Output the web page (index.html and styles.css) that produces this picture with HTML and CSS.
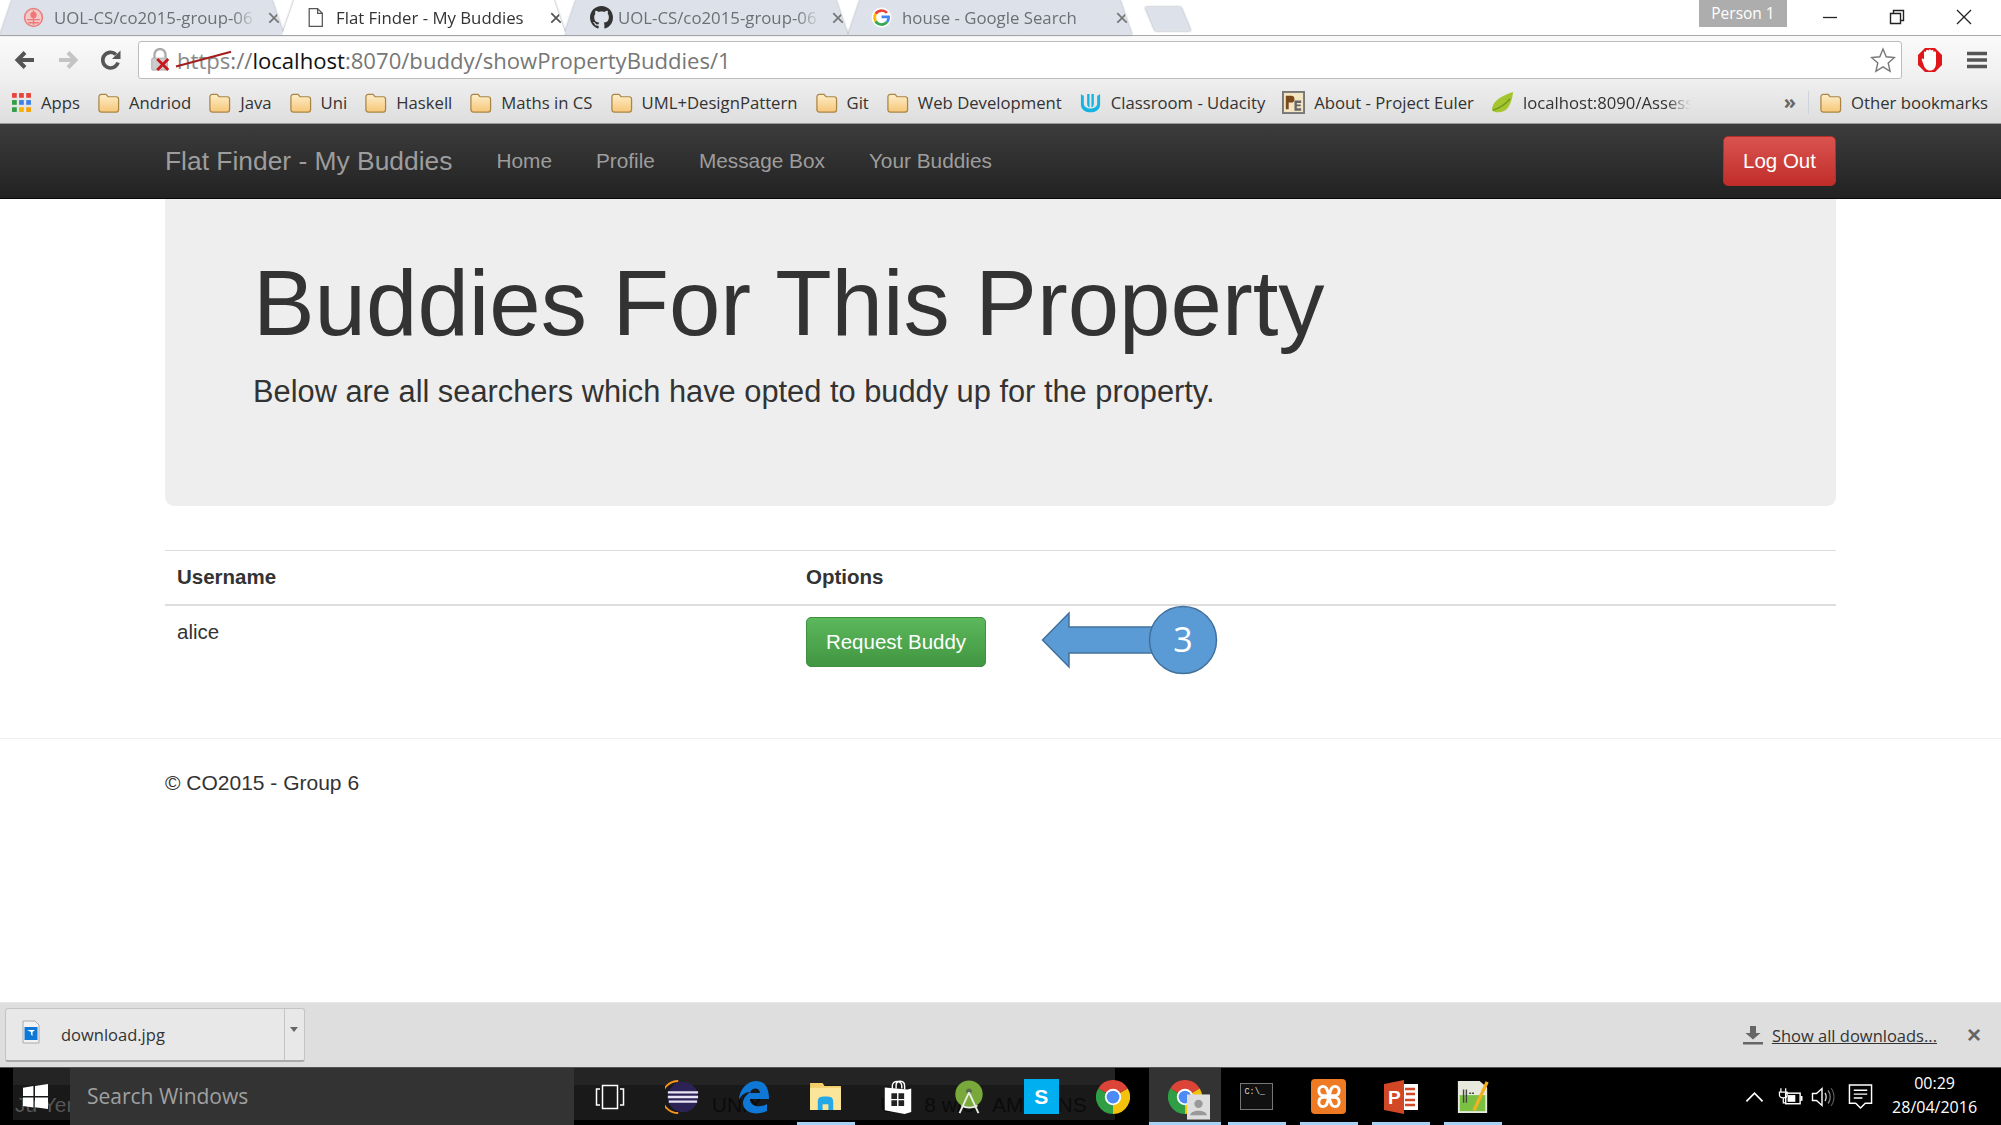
FILE: index.html
```html
<!DOCTYPE html>
<html lang="en">
<head>
  <meta charset="UTF-8" />
  <title>Flat Finder - My Buddies</title>
  <link rel="stylesheet" href="styles.css">
</head>
<body>

<svg class="defs" width="0" height="0">
  <defs>
    <linearGradient id="folderFill" x1="0" y1="0" x2="0" y2="1">
      <stop offset="0" stop-color="#fdeec9"/>
      <stop offset="1" stop-color="#f6c677"/>
    </linearGradient>
    <symbol id="folder" viewBox="0 0 24 22">
      <path d="M2 5.5C2 3.5 3 2.500 4.500 2.500H9.500L11.500 5H20C21.500 5 22.500 6 22.500 7.500V18.500C22.500 20 21.500 21 20 21H4.500C3 21 2 20 2 18.500Z" fill="url(#folderFill)" stroke="#a98547" stroke-width="1.300"/>
    </symbol>
    <symbol id="chrome" viewBox="0 0 24 24">
      <path d="M12 12L1.600 6A12 12 0 0 1 22.400 6Z" fill="#db4437"/>
      <path d="M12 12L22.400 6A12 12 0 0 1 12 24Z" fill="#f4c20d"/>
      <path d="M12 12L12 24A12 12 0 0 1 1.600 6Z" fill="#2f9e44"/>
      <circle cx="12" cy="12" r="5.800" fill="#fff"/>
      <circle cx="12" cy="12" r="4.500" fill="#4c8bf5"/>
    </symbol>
  </defs>
</svg>

<!-- browser tabs -->
<div class="tabstrip">
  <div class="tabs">
    <div class="tab">
      <svg class="favicon" viewBox="0 0 20 20"><circle cx="10" cy="10" r="8.500" fill="#f6c9c9" stroke="#e58080" stroke-width="1.500"/><circle cx="10" cy="7.500" r="3" fill="#e77"/><path d="M4 12H16M5 15H15M10 3V17" stroke="#e77" stroke-width="1.300"/></svg>
      <span class="tab-title">UOL-CS/co2015-group-06</span>
      <span class="tab-close">&times;</span>
    </div>
    <div class="tab active">
      <svg class="favicon" viewBox="0 0 20 20"><path d="M4 1.500H12L16.500 6V18.500H4Z M12 1.500V6H16.500" fill="#fff" stroke="#555" stroke-width="1.200"/></svg>
      <span class="tab-title">Flat Finder - My Buddies</span>
      <span class="tab-close">&times;</span>
    </div>
    <div class="tab">
      <svg class="favicon github" viewBox="0 0 16 16"><path fill="#333" d="M8 0C3.580 0 0 3.580 0 8c0 3.540 2.290 6.530 5.470 7.590.4.070.55-.17.55-.38 0-.19-.01-.82-.01-1.490-2.010.37-2.530-.49-2.690-.94-.09-.23-.48-.94-.82-1.130-.28-.15-.68-.52-.01-.53.63-.01 1.080.58 1.230.82.720 1.210 1.870.87 2.330.66.070-.52.280-.87.510-1.070-1.780-.2-3.640-.89-3.640-3.950 0-.87.310-1.590.820-2.150-.08-.2-.36-1.020.08-2.120 0 0 .67-.21 2.200.82.640-.18 1.320-.27 2-.27s1.360.09 2 .27c1.530-1.040 2.200-.82 2.200-.82.440 1.100.16 1.920.08 2.120.51.56.82 1.270.82 2.150 0 3.070-1.870 3.750-3.650 3.950.29.250.54.730.54 1.480 0 1.070-.01 1.930-.01 2.200 0 .21.150.46.550.38A8.010 8.010 0 0 0 16 8c0-4.420-3.580-8-8-8z"/></svg>
      <span class="tab-title">UOL-CS/co2015-group-06</span>
      <span class="tab-close">&times;</span>
    </div>
    <div class="tab">
      <svg class="favicon" viewBox="0 0 20 20">
        <circle cx="10" cy="10" r="9.500" fill="#fff"/>
        <path d="M15.200 5.600A6.800 6.800 0 0 0 4.400 6.500" fill="none" stroke="#ea4335" stroke-width="2.600"/>
        <path d="M4.400 6.500A6.800 6.800 0 0 0 4.400 13.500" fill="none" stroke="#fbbc05" stroke-width="2.600"/>
        <path d="M4.400 13.500A6.800 6.800 0 0 0 15.400 14.200" fill="none" stroke="#34a853" stroke-width="2.600"/>
        <path d="M15.400 14.200A6.800 6.800 0 0 0 16.800 9.500H10" fill="none" stroke="#4285f4" stroke-width="2.600"/>
      </svg>
      <span class="tab-title">house - Google Search</span>
      <span class="tab-close">&times;</span>
    </div>
    <div class="new-tab"></div>
  </div>
  <div class="person">Person 1</div>
  <div class="window-controls">
    <svg viewBox="0 0 16 16"><path d="M1 8.500H15" stroke="#222" stroke-width="1.300"/></svg>
    <svg viewBox="0 0 16 16"><path d="M1.500 4.500H11.500V14.500H1.500Z M4.500 4.500V1.500H14.500V11.500H11.500" fill="none" stroke="#222" stroke-width="1.400"/></svg>
    <svg viewBox="0 0 16 16"><path d="M1 1L15 15M15 1L1 15" stroke="#222" stroke-width="1.300"/></svg>
  </div>
</div>

<!-- address bar -->
<div class="toolbar">
  <div class="nav-buttons">
    <svg viewBox="0 0 24 24"><path d="M21 12H7M12 4.500L4.500 12L12 19.500" fill="none" stroke="#555" stroke-width="4"/></svg>
    <svg viewBox="0 0 24 24"><path d="M3 12H17M12 4.500L19.500 12L12 19.500" fill="none" stroke="#c4c4c4" stroke-width="4"/></svg>
    <svg viewBox="0 0 24 24"><path d="M19 14.500A7.800 7.800 0 1 1 17 6.500" fill="none" stroke="#555" stroke-width="3.600"/><path d="M21.500 2.500V11H13Z" fill="#555"/></svg>
  </div>
  <div class="omnibox">
    <svg class="lock" viewBox="0 0 24 26"><path d="M6 11V7A6 6 0 0 1 18 7V11" fill="none" stroke="#aaa" stroke-width="2.500"/><rect x="3" y="11" width="17" height="13" rx="1" fill="#ccc" stroke="#aaa"/><path d="M9 12L21 24M21 12L9 24" stroke="#c8171d" stroke-width="3"/></svg>
    <span class="url"><span class="url-scheme">https</span><span class="url-grey">://</span><span class="url-host">localhost</span><span class="url-grey">:8070/buddy/showPropertyBuddies/1</span></span>
    <svg class="star" viewBox="0 0 26 26"><path d="M13 2L16.200 9.800L24.500 10.500L18.200 16L20.100 24.300L13 19.900L5.900 24.300L7.800 16L1.500 10.500L9.800 9.800Z" fill="#fff" stroke="#777" stroke-width="1.400"/></svg>
  </div>
  <div class="toolbar-end">
    <svg class="adblock" viewBox="0 0 26 26"><path d="M8 1H18L25 8V18L18 25H8L1 18V8Z" fill="#e0161b"/><path d="M7 11V5.500C7 4 9 4 9 5.500V4C9 2.500 11.500 2.500 11.500 4V3.500C11.500 2 14 2 14 3.500V4C14 2.500 16.500 2.500 16.500 4V5.500C16.500 4 19 4 19 5.500V16C19 21 16.500 23.500 13 23.500C9.500 23.500 7.500 21 6.500 17.500L4.800 13C4.400 11.500 6 11 7 12.500Z" fill="#fff"/></svg>
    <svg class="menu" viewBox="0 0 20 20"><path d="M0 3.500H20M0 10H20M0 16.500H20" stroke="#555" stroke-width="3.600"/></svg>
  </div>
</div>

<!-- bookmarks -->
<div class="bookmarks">
  <div class="bookmark apps">
    <svg class="bm-icon" viewBox="0 0 20 20">
      <g fill="#e8433a"><rect x="1" y="1" width="4.500" height="4.500"/><rect x="7.700" y="1" width="4.500" height="4.500"/><rect x="14.500" y="1" width="4.500" height="4.500"/></g>
      <g fill="#2f9e44"><rect x="1" y="7.700" width="4.500" height="4.500"/></g>
      <g fill="#3f7fe8"><rect x="7.700" y="7.700" width="4.500" height="4.500"/><rect x="14.500" y="7.700" width="4.500" height="4.500"/></g>
      <rect x="1" y="14.500" width="4.500" height="4.500" fill="#2f9e44"/><rect x="7.700" y="14.500" width="4.500" height="4.500" fill="#f5b400"/><rect x="14.500" y="14.500" width="4.500" height="4.500" fill="#f5a100"/>
    </svg>
    <span>Apps</span>
  </div>
  <div class="bookmark"><svg class="bm-icon"><use href="#folder"/></svg><span>Andriod</span></div>
  <div class="bookmark"><svg class="bm-icon"><use href="#folder"/></svg><span>Java</span></div>
  <div class="bookmark"><svg class="bm-icon"><use href="#folder"/></svg><span>Uni</span></div>
  <div class="bookmark"><svg class="bm-icon"><use href="#folder"/></svg><span>Haskell</span></div>
  <div class="bookmark"><svg class="bm-icon"><use href="#folder"/></svg><span>Maths in CS</span></div>
  <div class="bookmark"><svg class="bm-icon"><use href="#folder"/></svg><span>UML+DesignPattern</span></div>
  <div class="bookmark"><svg class="bm-icon"><use href="#folder"/></svg><span>Git</span></div>
  <div class="bookmark"><svg class="bm-icon"><use href="#folder"/></svg><span>Web Development</span></div>
  <div class="bookmark">
    <svg class="bm-icon" viewBox="0 0 24 24"><path d="M2 3C2 3 3 4 5 5V13C5 20 19 20 19 13V5C21 4 22 3 22 3V14C22 25 2 25 2 14Z" fill="#15b4e0"/><path d="M8.500 3V13C8.500 16 10 17 11 17V3ZM15.500 3V13C15.500 16 14 17 13 17V3Z" fill="#15b4e0"/></svg>
    <span>Classroom - Udacity</span>
  </div>
  <div class="bookmark">
    <svg class="bm-icon" viewBox="0 0 24 24"><rect x="1" y="1" width="22" height="22" fill="#f3e4c2" stroke="#777" stroke-width="2"/><path d="M4 19V5H9.500A3.500 3.500 0 0 1 9.500 12H7V19Z" fill="#7a4a1e"/><path d="M13 10H20V12.500H15.500V14H19.500V16H15.500V18H20V20.500H13Z" fill="#666"/></svg>
    <span>About - Project Euler</span>
  </div>
  <div class="bookmark">
    <svg class="bm-icon" viewBox="0 0 24 24"><path d="M23 1C23 1 22 15 15 20C10 23 4 23 1 20C1 12 8 6 23 1Z" fill="#a5c52f"/><path d="M2 20C8 18 15 14 20 8" fill="none" stroke="#6f9a1e" stroke-width="1.500"/></svg>
    <span class="bm-fade">localhost:8090/Assess</span>
  </div>
  <div class="bm-more">&raquo;</div>
  <div class="bookmark bm-other"><svg class="bm-icon"><use href="#folder"/></svg><span>Other bookmarks</span></div>
</div>

<!-- the page itself -->
<div class="viewport">
  <nav class="navbar">
    <a class="brand" href="#">Flat Finder - My Buddies</a>
    <ul class="nav-links">
      <li><a href="#">Home</a></li>
      <li><a href="#">Profile</a></li>
      <li><a href="#">Message Box</a></li>
      <li><a href="#">Your Buddies</a></li>
    </ul>
    <a class="btn btn-logout" href="#">Log Out</a>
  </nav>

  <main class="container">
    <section class="jumbotron">
      <h1>Buddies For This Property</h1>
      <p>Below are all searchers which have opted to buddy up for the property.</p>
    </section>

    <table class="buddies">
      <thead>
        <tr><th class="col-name">Username</th><th>Options</th></tr>
      </thead>
      <tbody>
        <tr>
          <td>alice</td>
          <td>
            <div class="options">
              <a class="btn btn-request" href="#">Request Buddy</a>
              <svg class="callout" width="184" height="70" viewBox="0 0 184 70">
                <path d="M1.500 35L28 8V22H120V48H28V62Z" fill="#5b9bd5" stroke="#41719c" stroke-width="1.500"/>
                <circle cx="142" cy="35" r="33.500" fill="#5b9bd5" stroke="#41719c" stroke-width="1.500"/>
                <text x="142" y="47" text-anchor="middle" class="callout-num">3</text>
              </svg>
            </div>
          </td>
        </tr>
      </tbody>
    </table>
  </main>

  <footer class="page-footer">
    <p>&copy; CO2015 - Group 6</p>
  </footer>
</div>

<!-- downloads shelf -->
<div class="shelf">
  <div class="download-item">
    <div class="download-main">
      <svg class="file-icon" viewBox="0 0 18 24"><path d="M1 1H13L17 5V23H1Z" fill="#f2f2f2" stroke="#aaa"/><rect x="2.500" y="7" width="13" height="13" fill="#0f78d7"/><path d="M5 10H13L10.500 12V16L9 14.500V12Z" fill="#fff"/></svg>
      <span>download.jpg</span>
    </div>
    <div class="download-caret"></div>
  </div>
  <div class="shelf-end">
    <svg class="dl-arrow" viewBox="0 0 20 20"><path d="M7 1H13V8H17.500L10 14.500L2.500 8H7ZM0 17H20V19.500H0Z" fill="#666"/></svg>
    <a class="show-all" href="#">Show all downloads...</a>
    <span class="shelf-close">&times;</span>
  </div>
</div>

<!-- windows taskbar -->
<div class="taskbar">
  <div class="ghost-window">
    <span class="ghost-a">Ju Yeng</span>
    <span class="ghost-b">UNIX</span>
    <span class="ghost-c">U&nbsp;&nbsp;&nbsp;&nbsp;&nbsp;8 w/o&nbsp;&nbsp;&nbsp;AM</span>
    <span class="ghost-d">NS</span>
  </div>
  <div class="start">
    <svg viewBox="0 0 24 24"><path d="M0 3.500L10 2V11.500H0ZM11.500 1.800L24 0V11.500H11.500ZM0 13H10V22.500L0 21ZM11.500 13H24V24L11.500 22.200Z" fill="#fff"/></svg>
  </div>
  <div class="search-box">Search Windows</div>
  <div class="task-icons">
    <div class="task"><svg class="ti taskview" viewBox="0 0 30 26"><rect x="7.500" y="1.500" width="15" height="23" fill="none" stroke="#fff" stroke-width="1.500"/><path d="M5 5H1.500V21H5M25 5H28.500V21H25" fill="none" stroke="#fff" stroke-width="1.500"/></svg></div>
    <div class="task"><svg class="ti" viewBox="0 0 36 36"><path d="M14 1A17 17 0 0 0 14 35" fill="none" stroke="#f7941e" stroke-width="2"/><circle cx="19" cy="18" r="16" fill="#2c2255"/><path d="M3 13H35M3 18H35M4 23H34" stroke="#e8e4f5" stroke-width="2.400"/></svg></div>
    <div class="task"><svg class="ti" viewBox="0 0 32 34"><path d="M1 20C1 10 9 1 18 1C27 1 31 8 31 19H12C12 27 22 28 29 24V31C19 36 5 33 5 23C5 18 9 14 13 12C7 12 3 15 1 20ZM12 13H22C22 7 13 7 12 13Z" fill="#0f78d7" fill-rule="evenodd"/></svg></div>
    <div class="task running"><svg class="explorer" viewBox="0 0 32 28"><path d="M0 0H13L15 3H32V28H0Z" fill="#f2cf6b"/><path d="M0 5H32V28H0Z" fill="#fbe59b"/><path d="M8 28V20C8 15 10 14 16 14C22 14 24 15 24 20V28H19V22H13V28Z" fill="#23a9e8"/></svg></div>
    <div class="task"><svg class="ti" viewBox="0 0 30 36"><path d="M9 9V6C9 0 19 0 19 6V9M13 9V5C13 0 22 0 22 6V10" fill="none" stroke="#fff" stroke-width="1.500"/><path d="M1 8L25 10L29 9V34L22 36L1 32Z" fill="#fff"/><path d="M8 14H14V20H8ZM15.500 14H21.500V20H15.500ZM8 21.500H14V27.500H8ZM15.500 21.500H21.500V27.500H15.500Z" fill="#222"/></svg></div>
    <div class="task"><svg class="ti" viewBox="0 0 30 36"><circle cx="15" cy="15" r="14.500" fill="#78a93a"/><circle cx="15" cy="12" r="3" fill="#5b6b50"/><path d="M15 13L5 35M15 13L25 35M7 27C12 30 19 30 24 27" fill="none" stroke="#e9ede4" stroke-width="2"/></svg></div>
    <div class="task"><div class="skype">S</div></div>
    <div class="task"><svg class="ti"><use href="#chrome"/></svg></div>
    <div class="task running current">
      <div class="chrome-person">
        <svg class="ti"><use href="#chrome"/></svg>
        <svg class="person-badge" viewBox="0 0 22 24"><rect width="22" height="24" fill="#ddd"/><circle cx="11" cy="9" r="4" fill="#999"/><path d="M3 20C3 14 19 14 19 20Z" fill="#999"/></svg>
      </div>
    </div>
    <div class="task running"><div class="cmd">C:\_</div></div>
    <div class="task running"><div class="xampp"><svg viewBox="0 0 20 20"><path d="M6 3C2 3 2 9 6 9.500H14C18 9 18 3 14 3C11 3 11 7 10 10C9 7 9 3 6 3ZM6 17C2 17 2 11 6 10.500H14C18 11 18 17 14 17C11 17 11 13 10 10C9 13 9 17 6 17Z" fill="none" stroke="#fff" stroke-width="2"/></svg></div></div>
    <div class="task running"><svg class="ti" viewBox="0 0 34 34"><rect x="17" y="4" width="17" height="26" fill="#fff"/><path d="M21 9H31M22 14H31M21 20H31M21 25H31" stroke="#d24726" stroke-width="2.500"/><path d="M0 4L20 0V34L0 30Z" fill="#d24726"/><text x="4" y="24" class="ppt-letter">P</text></svg></div>
    <div class="task running"><svg class="ti" viewBox="0 0 34 36"><path d="M1 1H24L32 8V35H1Z" fill="#e6e9dc"/><path d="M3 16H30V33H3Z" fill="#7ac142"/><path d="M7 10V24M10 10V24" stroke="#444" stroke-width="1.500"/><path d="M13 14H18" stroke="#444" stroke-width="1.500" stroke-dasharray="2 1"/><path d="M32 2L20 28L18 32" stroke="#f5b021" stroke-width="3.500" fill="none"/></svg></div>
  </div>
  <div class="tray">
    <svg class="tray-chevron" viewBox="0 0 20 12"><path d="M1.500 10.500L10 2L18.500 10.500" fill="none" stroke="#fff" stroke-width="1.800"/></svg>
    <svg class="tray-power" viewBox="0 0 26 22"><path d="M3 2V6M8 2V6M1.500 6H9.500V9C9.500 11 7.500 12 5.500 12C3.500 12 1.500 11 1.500 9Z M5.500 12V17H8" fill="none" stroke="#fff" stroke-width="1.300"/><rect x="8" y="7" width="15" height="11" fill="none" stroke="#fff" stroke-width="1.500"/><rect x="10" y="9" width="8" height="7" fill="#fff"/><rect x="23.500" y="10" width="2" height="5" fill="#fff"/></svg>
    <svg class="tray-sound" viewBox="0 0 24 22"><path d="M1.500 7.500H5.500L11 2.500V19.500L5.500 14.500H1.500Z" fill="none" stroke="#fff" stroke-width="1.400"/><path d="M14 7C15.500 9 15.500 13 14 15" fill="none" stroke="#ddd" stroke-width="1.300"/><path d="M17 4.500C20 8 20 14 17 17.500" fill="none" stroke="#888" stroke-width="1.200"/><path d="M20 2C24 7 24 15 20 20" fill="none" stroke="#555" stroke-width="1.200"/></svg>
    <svg class="tray-note" viewBox="0 0 26 28"><path d="M1.500 1.500H24.500V20.500H18L13 25.500L8 20.500H1.500Z" fill="none" stroke="#fff" stroke-width="1.500"/><path d="M6 7H20M6 11H20M6 15H15" stroke="#fff" stroke-width="1.500"/></svg>
    <div class="clock"><div>00:29</div><div>28/04/2016</div></div>
  </div>
</div>

</body>
</html>
```

FILE: styles.css
```css
/* Reset */
* {
  margin: 0; padding: 0; box-sizing: border-box;
}

html, body {
  width: 2001px;
  height: 1125px;
  overflow: hidden;
}

body {
  display: flex;
  flex-direction: column;
  background: #fff;
  color: #333;
  font-family: "Liberation Sans", Arial, sans-serif;
}

a {
  text-decoration: none;
}

.defs {
  position: absolute;
}

/* Tabs */
.tabstrip {
  height: 36px;
  flex-shrink: 0;
  display: flex;
  background: #fff;
  border-bottom: 1px solid #a9a9a9;
  font-family: "Open Sans", "Noto Sans", sans-serif;
}

.tabs {
  display: flex;
  align-items: flex-end;
  flex: 1;
  filter: drop-shadow(0 0 1px #8f96a1);
}

.tab {
  width: 284px;
  height: 35px;
  display: flex;
  align-items: center;
  padding: 0 3px 0 23px;
  gap: 10px;
  background: #dde2ea;
  color: #6c6f75;
  font-size: 16.800px;
  clip-path: polygon(0 100%, 12px 0, calc(100% - 12px) 0, 100% 100%);
}

.tab.active {
  width: 284px;
  margin: 0 -2px;
  background: #fff;
  color: #333;
  padding-left: 23px;
}

.favicon {
  width: 21px;
  height: 21px;
  flex-shrink: 0;
}

.favicon.github {
  width: 23px;
  height: 23px;
  margin-left: 3px;
  margin-right: -5px;
}

.tab-title {
  flex: 1;
  white-space: nowrap;
  overflow: hidden;
  -webkit-mask-image: linear-gradient(to right, #000 88%, transparent);
  mask-image: linear-gradient(to right, #000 88%, transparent);
}

.tab.active .tab-title {
  -webkit-mask-image: none;
  mask-image: none;
}

.tab-close {
  font-family: "Liberation Sans", sans-serif;
  font-size: 24px;
  line-height: 1;
  color: #777;
}

.tab.active .tab-close {
  color: #555;
}

.new-tab {
  width: 46px;
  height: 24px;
  margin: 0 0 4px 13px;
  background: #dde2ea;
  clip-path: polygon(0 0, 78% 0, 100% 100%, 22% 100%);
}

.person {
  width: 88px;
  height: 27px;
  margin-right: 12px;
  background: #adadad;
  color: #fff;
  font-size: 15.500px;
  text-align: center;
  line-height: 26px;
}

.window-controls {
  width: 202px;
  height: 35px;
  display: flex;
  align-items: flex-start;
  justify-content: space-between;
  padding: 9px 29px 0 23px;
}

.window-controls svg {
  width: 16px;
  height: 16px;
}

/* Address bar */
.toolbar {
  height: 46px;
  flex-shrink: 0;
  display: flex;
  align-items: center;
  padding-top: 2px;
  background: linear-gradient(#fafafa, #efefef);
}

.nav-buttons {
  width: 138px;
  display: flex;
  justify-content: space-between;
  padding: 0 15px 0 13px;
}

.nav-buttons svg {
  width: 24px;
  height: 24px;
}

.omnibox {
  width: 1764px;
  height: 38px;
  display: flex;
  align-items: center;
  padding: 0 5px 0 10px;
  background: #fff;
  border: 1px solid #bdbdbd;
  border-radius: 3px;
  font-family: "Open Sans", "Noto Sans", sans-serif;
  font-size: 22.100px;
}

.lock {
  width: 22px;
  height: 24px;
  margin-right: 6px;
}

.url {
  flex: 1;
  white-space: nowrap;
}

.url-scheme {
  position: relative;
  color: #888;
}

.url-scheme::after {
  content: "";
  position: absolute;
  left: -2px;
  right: -2px;
  top: 13px;
  height: 2px;
  background: #a51c1c;
  transform: rotate(-15deg);
}

.url-grey {
  color: #777;
}

.url-host {
  color: #111;
}

.star {
  width: 26px;
  height: 26px;
}

.toolbar-end {
  flex: 1;
  display: flex;
  align-items: center;
  justify-content: space-between;
  padding: 0 14px 0 15px;
}

.adblock {
  width: 26px;
  height: 26px;
}

.menu {
  width: 20px;
  height: 20px;
}

/* Bookmarks */
.bookmarks {
  height: 42px;
  flex-shrink: 0;
  display: flex;
  align-items: center;
  gap: 17px;
  padding: 0 13px 1px 11px;
  background: linear-gradient(#eeeeee, #dedede);
  border-bottom: 1px solid #9a9a9a;
  font-family: "Open Sans", "Noto Sans", sans-serif;
  font-size: 16.700px;
  color: #333;
}

.bookmark {
  display: flex;
  align-items: center;
  gap: 9px;
  white-space: nowrap;
}

.bm-icon {
  width: 23px;
  height: 23px;
  flex-shrink: 0;
}

.apps .bm-icon {
  width: 21px;
  height: 21px;
}

.bm-fade {
  width: 168px;
  overflow: hidden;
  -webkit-mask-image: linear-gradient(to right, #000 85%, transparent);
  mask-image: linear-gradient(to right, #000 85%, transparent);
}

.bm-more {
  margin-left: auto;
  margin-right: -5px;
  font-size: 20px;
  font-weight: 700;
  line-height: 1;
  color: #666;
}

.bm-other {
  padding-left: 10px;
  border-left: 1px solid #cfd4da;
}

/* Page */
.viewport {
  flex: 1;
  min-height: 0;
  background: #fff;
}

.navbar {
  height: 75px;
  display: flex;
  align-items: center;
  padding: 0 165px;
  background: linear-gradient(#3c3c3c, #222);
  border-bottom: 1px solid #080808;
}

.brand {
  font-size: 26.400px;
  color: #9d9d9d;
  margin-right: 22px;
}

.nav-links {
  display: flex;
  list-style: none;
  gap: 44px;
  flex: 1;
  margin-left: 22px;
}

.nav-links a {
  font-size: 20.800px;
  color: #9d9d9d;
}

.btn {
  display: inline-block;
  font-size: 20.500px;
  color: #fff;
  border-radius: 5px;
  text-align: center;
}

.btn-logout {
  width: 113px;
  height: 50px;
  line-height: 48px;
  background: linear-gradient(#d9534f, #c12e2a);
  border: 1px solid #b92c28;
}

.container {
  padding: 0 165px;
}

.jumbotron {
  height: 307px;
  padding: 54px 88px 0;
  background: #eee;
  border-radius: 0 0 9px 9px;
}

.jumbotron h1 {
  font-size: 92.400px;
  font-weight: 500;
  line-height: 101px;
  color: #333;
}

.jumbotron p {
  margin-top: 16px;
  font-size: 30.800px;
  line-height: 44px;
  color: #333;
}

.buddies {
  width: 100%;
  margin-top: 44px;
  border-collapse: collapse;
  table-layout: fixed;
  font-size: 20.500px;
}

.buddies th {
  height: 54px;
  padding: 0 12px;
  text-align: left;
  font-weight: 700;
  border-top: 1px solid #ddd;
  border-bottom: 2px solid #ddd;
}

.col-name {
  width: 629px;
}

.buddies td {
  padding: 11px 12px;
  vertical-align: top;
  line-height: 29px;
}

.options {
  display: flex;
  align-items: flex-start;
  gap: 55px;
}

.btn-request {
  width: 180px;
  height: 50px;
  line-height: 48px;
  background: linear-gradient(#5cb85c, #419641);
  border: 1px solid #3e8f3e;
}

.callout {
  margin-top: -12px;
}

.callout-num {
  font-family: "Open Sans", "Noto Sans", sans-serif;
  font-size: 34px;
  fill: #fff;
}

.page-footer {
  margin-top: 52px;
  padding: 29px 165px 0;
  border-top: 1px solid #eee;
  font-size: 21px;
  line-height: 30px;
}

/* Downloads shelf */
.shelf {
  height: 65px;
  flex-shrink: 0;
  display: flex;
  align-items: center;
  justify-content: space-between;
  padding: 0 20px 0 5px;
  background: #dedede;
  border-top: 1px solid #e6e6e6;
  font-family: "Open Sans", "Noto Sans", sans-serif;
  font-size: 16.500px;
  color: #333;
}

.download-item {
  width: 300px;
  height: 54px;
  display: flex;
  background: #e8e8e8;
  border: 1px solid #c4c4c4;
  border-bottom: 2px solid #aaa;
  border-radius: 3px;
}

.download-main {
  flex: 1;
  display: flex;
  align-items: center;
  gap: 21px;
  padding-left: 16px;
  border-right: 1px solid #c4c4c4;
}

.file-icon {
  width: 18px;
  height: 24px;
  margin-top: -6px;
}

.download-caret {
  width: 19px;
  position: relative;
}

.download-caret::after {
  content: "";
  position: absolute;
  top: 18px;
  left: 5px;
  border: 4px solid transparent;
  border-top: 5px solid #666;
}

.shelf-end {
  display: flex;
  align-items: center;
  gap: 9px;
}

.dl-arrow {
  width: 20px;
  height: 20px;
}

.show-all {
  color: #333;
  text-decoration: underline;
  margin-right: 21px;
}

.shelf-close {
  font-family: "Liberation Sans", sans-serif;
  font-size: 24px;
  font-weight: 700;
  line-height: 1;
  color: #666;
}

/* Taskbar */
.taskbar {
  height: 58px;
  flex-shrink: 0;
  position: relative;
  display: flex;
  background: #000;
  color: #fff;
  border-top: 1px solid #555;
}

.ghost-window {
  position: absolute;
  top: 0;
  left: 13px;
  width: 1102px;
  height: 52px;
  display: flex;
  align-items: flex-end;
  padding-bottom: 3px;
  background: linear-gradient(#242424 32%, #191919 33%);
  font-size: 21px;
  color: #0b0b0b;
  white-space: nowrap;
}

.ghost-a {
  margin-left: 2px;
  color: #555;
}

.ghost-b {
  margin-left: 622px;
}

.ghost-c {
  margin-left: 118px;
}

.ghost-d {
  margin-left: 34px;
}

.start {
  width: 70px;
  position: relative;
  display: flex;
  align-items: center;
  justify-content: center;
  padding-bottom: 1px;
}

.start svg {
  width: 25px;
  height: 25px;
}

.search-box {
  width: 504px;
  position: relative;
  background: #333;
  color: #a0a0a0;
  font-family: "Open Sans", "Noto Sans", sans-serif;
  font-size: 21px;
  padding-left: 17px;
  line-height: 56px;
}

.task-icons {
  display: flex;
  position: relative;
}

.task {
  position: relative;
  width: 71.900px;
  height: 57px;
  display: flex;
  align-items: center;
  justify-content: center;
}

.task.running::after {
  content: "";
  position: absolute;
  left: 7px;
  right: 7px;
  bottom: 0;
  height: 3px;
  background: #a6d3f5;
}

.task.current {
  background: #333;
}

.task.current::after {
  left: 0;
  right: 0;
}

.ti {
  width: 34px;
  height: 34px;
}

.taskview {
  width: 30px;
  height: 26px;
}

.explorer {
  width: 31px;
  height: 27px;
}

.skype {
  width: 35px;
  height: 35px;
  background: #00aff0;
  color: #fff;
  font-size: 21px;
  font-weight: 700;
  text-align: center;
  line-height: 35px;
}

.chrome-person {
  position: relative;
  width: 34px;
  height: 34px;
}

.person-badge {
  position: absolute;
  right: -8px;
  bottom: -6px;
  width: 23px;
  height: 26px;
}

.cmd {
  width: 33px;
  height: 27px;
  padding: 3px 0 0 3px;
  background: #111;
  border: 1.500px solid #777;
  font-family: "Liberation Mono", monospace;
  font-size: 8.500px;
  color: #ddd;
}

.xampp {
  width: 35px;
  height: 35px;
  padding-top: 3px;
  background: #ef7a24;
  border-radius: 4px;
}

.xampp svg {
  display: block;
  width: 30px;
  height: 29px;
  margin: 0 auto;
}

.ppt-letter {
  font-size: 19px;
  font-weight: 700;
  fill: #fff;
}

.tray {
  position: relative;
  flex: 1;
  display: flex;
  align-items: center;
}

.tray-chevron {
  width: 19px;
  height: 12px;
  margin-left: 236px;
}

.tray-power {
  width: 25px;
  height: 22px;
  margin-left: 14px;
}

.tray-sound {
  width: 24px;
  height: 22px;
  margin-left: 8px;
}

.tray-note {
  width: 25px;
  height: 28px;
  margin-left: 13px;
}

.clock {
  width: 100px;
  margin-left: 12px;
  padding-bottom: 4px;
  text-align: center;
  font-family: "Open Sans", "Noto Sans", sans-serif;
  font-size: 16px;
  line-height: 24px;
}
```
